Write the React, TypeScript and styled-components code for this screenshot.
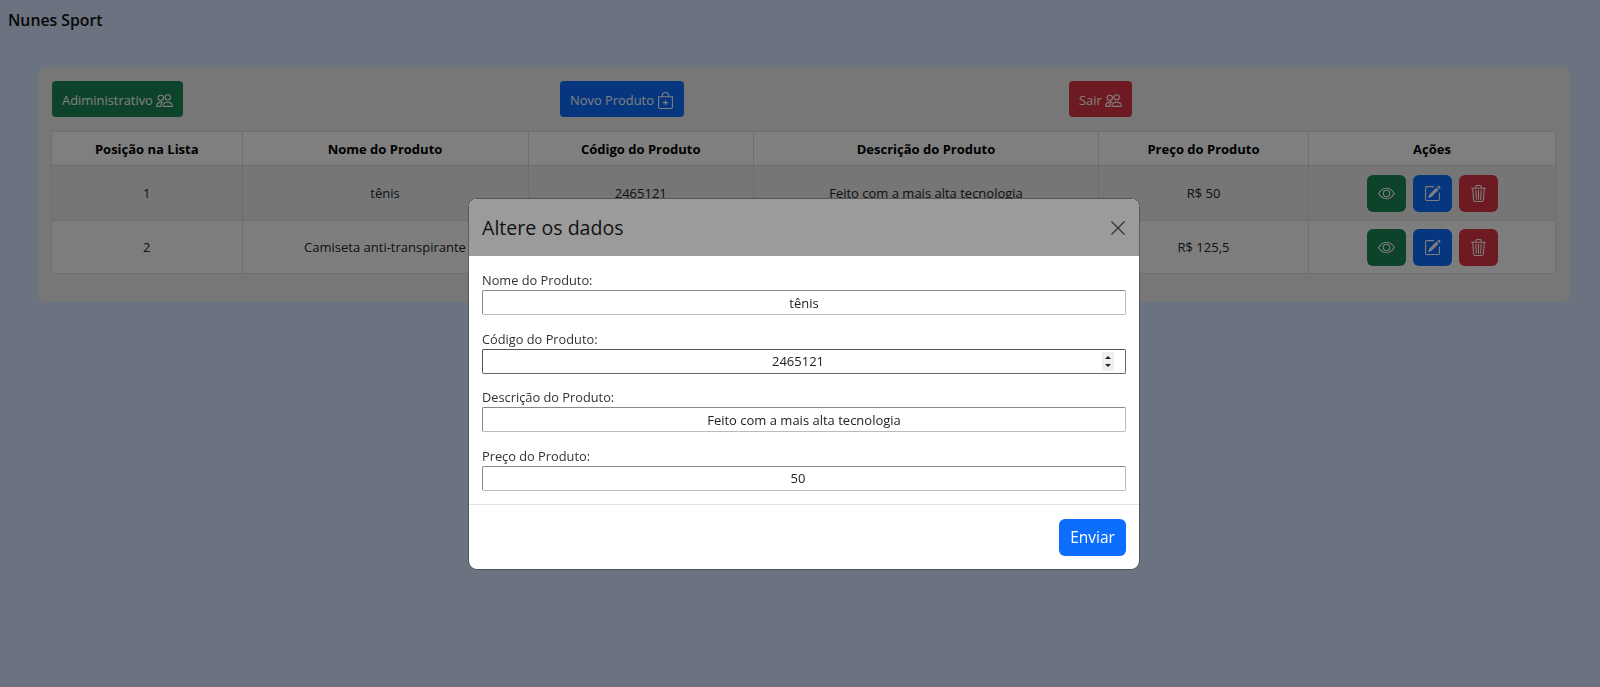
import React from "react";
import styled, { createGlobalStyle } from "styled-components";
import { BsBagPlus, BsEye, BsPencilSquare, BsPeople, BsTrash3 } from "react-icons/bs";

const GlobalStyle = createGlobalStyle`
    html, body {
        margin: 0;
        height: 687px;
        overflow: hidden;
    }
    body {
        background-color: #d4e6fe;
        font-family: "Open Sans", "Liberation Sans", sans-serif;
        font-size: 13px;
        color: #212529;
    }
`

const Page = styled.div`
    padding: 10px 30px 0 8px;
`

const Brand = styled.h1`
    margin: 0;
    font-size: 15.8px;
    line-height: 20px;
    font-weight: 600;
    color: #111;
`

const Card = styled.section`
    margin: 37px 0 0 30px;
    padding: 14px 14px 28px;
    background-color: #eeeeee;
    border-radius: 8px;
`

const Toolbar = styled.div`
    display: grid;
    grid-template-columns: 508px 509px auto;
    margin-bottom: 14px;
    justify-items: start;
`

const tones = {
    green: "#198754",
    blue: "#0d6efd",
    red: "#dc3545",
}

const Button = styled.button<{ $tone: keyof typeof tones }>`
    display: inline-flex;
    align-items: center;
    justify-content: center;
    gap: 3px;
    height: 36px;
    padding: 2px 10px 0;
    border: 0;
    border-radius: 4px;
    background-color: ${(p) => tones[p.$tone]};
    color: #fff;
    font: inherit;
    font-size: 12.9px;
`

const Table = styled.table`
    width: 1504px;
    margin-left: -1px;
    table-layout: fixed;
    border-collapse: collapse;
    text-align: center;
`

const HeadCell = styled.th`
    height: 33px;
    padding: 0;
    font-size: 13px;
    font-weight: 700;
    color: #000;
    background-color: #ffffff;
    border: 1px solid #dcdcdc;
`

const Row = styled.tr<{ $striped?: boolean }>`
    height: ${(p) => (p.$striped ? "55px" : "53px")};
    background-color: ${(p) => (p.$striped ? "#ececec" : "#fbfbfb")};
`

const Cell = styled.td`
    padding: 0;
    border: 1px solid #dcdcdc;
`

const Actions = styled.div`
    display: flex;
    justify-content: center;
    gap: 7px;
`

const IconButton = styled(Button)`
    width: 39px;
    height: 37px;
    padding: 0;
    border-radius: 6px;
    font-size: 17px;
`

const Backdrop = styled.div`
    position: fixed;
    inset: 0;
    display: flex;
    justify-content: center;
    align-items: flex-start;
    padding: 199px 0 0 8px;
    background-color: rgba(0, 0, 0, 0.5);
`

const Modal = styled.div`
    width: 670px;
    height: 370px;
    display: flex;
    flex-direction: column;
    background-color: #fff;
    border-radius: 8px;
    box-shadow: 0 0 0 1px rgba(0, 0, 0, 0.25);
    overflow: hidden;
`

const ModalHeader = styled.header`
    height: 57px;
    padding: 0 13px;
    display: flex;
    align-items: center;
    justify-content: space-between;
    background-color: #9c9b9c;
`

const ModalTitle = styled.h2`
    margin: 0;
    font-size: 19.6px;
    font-weight: 500;
    color: #111;
`

const CloseButton = styled.button`
    width: 16px;
    height: 16px;
    padding: 0;
    border: 0;
    background: none;
    color: #333;
`

const ModalBody = styled.form`
    height: 249px;
    padding: 15px 13px 0;
    box-sizing: border-box;
    display: flex;
    flex-direction: column;
    gap: 14.67px;
    border-bottom: 1px solid #dee2e6;
`

const Field = styled.label`
    display: block;
    color: #333;
`

const FieldName = styled.span`
    display: block;
    height: 19px;
    line-height: 19px;
    font-size: 12.8px;
`

const InputWrap = styled.div`
    position: relative;
`

const Input = styled.input<{ $hovered?: boolean; $number?: boolean }>`
    display: block;
    width: 100%;
    height: 25px;
    box-sizing: border-box;
    padding: 0 ${(p) => (p.$number ? "12px" : "0")} 0 0;
    border: 1.5px solid;
    border-color: ${(p) => (p.$hovered ? "#555 #666 #666 #555" : "#888 #bbb #bbb #888")};
    border-radius: 2px;
    background-color: #fff;
    font: inherit;
    color: #222;
    text-align: center;
    outline: none;
`

const Spinner = styled.span`
    position: absolute;
    top: 3px;
    right: 12px;
    width: 12px;
    height: 19px;
    display: flex;
    flex-direction: column;
    align-items: center;
    justify-content: center;
    gap: 5px;
    background-color: #f0f0f0;
`

const ModalFooter = styled.footer`
    flex: 1;
    padding: 0 13px;
    display: flex;
    align-items: center;
    justify-content: flex-end;
`

const SubmitButton = styled.button`
    width: 67px;
    height: 37px;
    border: 0;
    border-radius: 6px;
    background-color: #0d6efd;
    color: #fff;
    font: inherit;
    font-size: 15.5px;
`

const products = [
    { pos: 1, nome: "tênis", codigo: "2465121", descricao: "Feito com a mais alta tecnologia", preco: "R$ 50" },
    { pos: 2, nome: "Camiseta anti-transpirante", codigo: "", descricao: "", preco: "R$ 125,5" },
]

const columns = [
    { title: "Posição na Lista", width: 190.5 },
    { title: "Nome do Produto", width: 286 },
    { title: "Código do Produto", width: 225.5 },
    { title: "Descrição do Produto", width: 345 },
    { title: "Preço do Produto", width: 210 },
    { title: "Ações", width: 247 },
]

export default function App() {
    return (
        <>
            <GlobalStyle />
            <Page>
                <Brand>Nunes Sport</Brand>
                <Card>
                    <Toolbar>
                        <div>
                            <Button $tone="green">Adiministrativo <BsPeople size={17} /></Button>
                        </div>
                        <div>
                            <Button $tone="blue">Novo Produto <BsBagPlus size={17} /></Button>
                        </div>
                        <div>
                            <Button $tone="red">Sair <BsPeople size={17} /></Button>
                        </div>
                    </Toolbar>
                    <Table>
                        <colgroup>
                            {columns.map((c) => <col key={c.title} width={c.width} />)}
                        </colgroup>
                        <thead>
                            <tr>
                                {columns.map((c) => <HeadCell key={c.title}>{c.title}</HeadCell>)}
                            </tr>
                        </thead>
                        <tbody>
                            {products.map((p) => (
                                <Row key={p.pos} $striped={p.pos === 1}>
                                    <Cell>{p.pos}</Cell>
                                    <Cell>{p.nome}</Cell>
                                    <Cell>{p.codigo}</Cell>
                                    <Cell>{p.descricao}</Cell>
                                    <Cell>{p.preco}</Cell>
                                    <Cell>
                                        <Actions>
                                            <IconButton $tone="green"><BsEye /></IconButton>
                                            <IconButton $tone="blue"><BsPencilSquare /></IconButton>
                                            <IconButton $tone="red"><BsTrash3 /></IconButton>
                                        </Actions>
                                    </Cell>
                                </Row>
                            ))}
                        </tbody>
                    </Table>
                </Card>
            </Page>
            <Backdrop>
                <Modal>
                    <ModalHeader>
                        <ModalTitle>Altere os dados</ModalTitle>
                        <CloseButton>
                            <svg width="16" height="16" viewBox="0 0 16 16" fill="none" stroke="currentColor" strokeWidth="1.3">
                                <path d="M1.5 1.5l13 13M14.5 1.5l-13 13" />
                            </svg>
                        </CloseButton>
                    </ModalHeader>
                    <ModalBody>
                        <Field>
                            <FieldName>Nome do Produto:</FieldName>
                            <InputWrap><Input defaultValue="tênis" /></InputWrap>
                        </Field>
                        <Field>
                            <FieldName>Código do Produto:</FieldName>
                            <InputWrap>
                                <Input $hovered $number defaultValue="2465121" />
                                <Spinner>
                                    <svg width="6" height="3" viewBox="0 0 6 3"><path d="M3 0l3 3H0z" fill="#222" /></svg>
                                    <svg width="6" height="3" viewBox="0 0 6 3"><path d="M0 0h6L3 3z" fill="#222" /></svg>
                                </Spinner>
                            </InputWrap>
                        </Field>
                        <Field>
                            <FieldName>Descrição do Produto:</FieldName>
                            <InputWrap><Input defaultValue="Feito com a mais alta tecnologia" /></InputWrap>
                        </Field>
                        <Field>
                            <FieldName>Preço do Produto:</FieldName>
                            <InputWrap><Input $number defaultValue="50" /></InputWrap>
                        </Field>
                    </ModalBody>
                    <ModalFooter>
                        <SubmitButton>Enviar</SubmitButton>
                    </ModalFooter>
                </Modal>
            </Backdrop>
        </>
    )
}
